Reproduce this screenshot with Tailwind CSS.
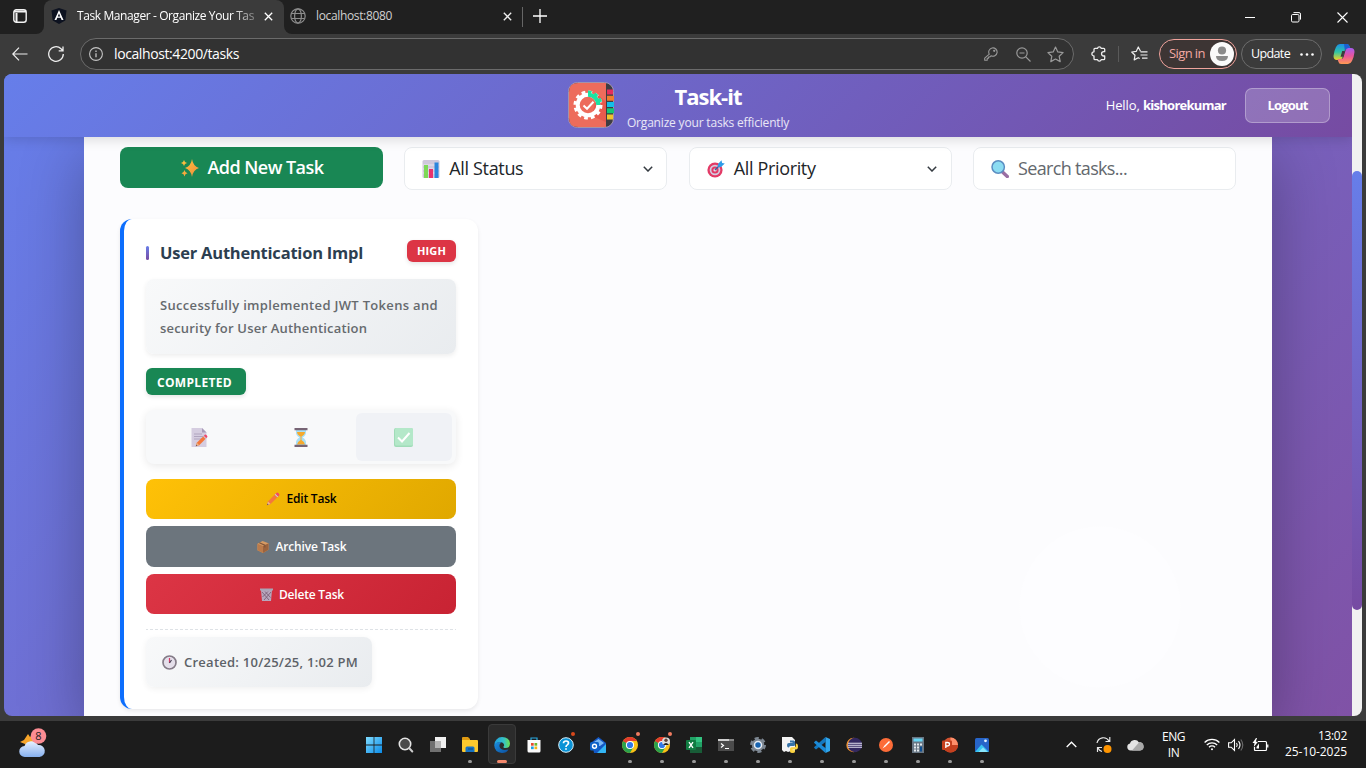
<!DOCTYPE html>
<html lang="en">
<head>
<meta charset="utf-8">
<title>Task Manager - Organize Your Tasks</title>
<script src="https://cdn.jsdelivr.net/npm/@tailwindcss/browser@4"></script>
</head>
<body class="flex h-[768px] w-[1366px] flex-col overflow-hidden bg-[#3b3b3b] font-['Open_Sans','Noto_Sans',sans-serif] whitespace-nowrap">
<svg class="absolute size-0">
  <defs>
    <linearGradient id="gold" x1="0" y1="0" x2="1" y2="1"><stop offset="0" stop-color="#ffc83d"/><stop offset="1" stop-color="#f08a3c"/></linearGradient>
    <linearGradient id="win" gradientUnits="userSpaceOnUse" x1="0" y1="0" x2="16" y2="16"><stop offset="0" stop-color="#7fdcff"/><stop offset="1" stop-color="#0a8be8"/></linearGradient>
    <linearGradient id="cloud" x1="0" y1="0" x2="0" y2="1"><stop offset="0" stop-color="#e8f1ff"/><stop offset="1" stop-color="#86b0ee"/></linearGradient>
    <linearGradient id="edgeA" x1="0" y1="0" x2="1" y2="0"><stop offset="0" stop-color="#1e9de0"/><stop offset=".6" stop-color="#35c1c8"/><stop offset="1" stop-color="#6be04c"/></linearGradient>
    <linearGradient id="edgeB" x1="0" y1="0" x2="1" y2="1"><stop offset="0" stop-color="#1b8fe0"/><stop offset="1" stop-color="#0c4f9e"/></linearGradient>
    <linearGradient id="cpA" x1="0" y1="0" x2="0" y2="1"><stop offset="0" stop-color="#1b8ee8"/><stop offset=".5" stop-color="#2fc5a5"/><stop offset="1" stop-color="#f5d324"/></linearGradient>
    <linearGradient id="cpB" x1="0" y1="0" x2="0" y2="1"><stop offset="0" stop-color="#a65cf0"/><stop offset=".5" stop-color="#e8559c"/><stop offset="1" stop-color="#ff9a52"/></linearGradient>
    <symbol id="chrome" viewBox="0 0 16 16"><circle cx="8" cy="8" r="8" fill="#fbc116"/><path d="M8 8 1.100 4A8 8 0 0 1 14.900 4H8z" fill="#e33b2e"/><path d="M1.100 4A8 8 0 0 0 8 16l3.500-6L8 8z" fill="#2ba24c"/><path d="M1.100 4h6.900v4z" fill="#e33b2e"/><circle cx="8" cy="8" r="4.100" fill="#fff"/><circle cx="8" cy="8" r="3.100" fill="#3078e8"/></symbol>
    <symbol id="pencil" viewBox="0 0 16 16"><path d="m1 15 1.200-4.200L11 2l3 3-8.800 8.800z" fill="#f4783c"/><path d="m2.200 10.800 3 3L1 15z" fill="#e9b98e"/><path d="m1 15 .6-2 1.400 1.400z" fill="#6b4a55"/><path d="m10 3 3 3 1-1-3-3z" fill="#c9c4da"/><path d="m11 2 1-1q1-.8 2 .2l.8.8q1 1 .2 2l-1 1z" fill="#f0466b"/></symbol>
  </defs>
</svg>

<!-- Tab strip -->
<div class="flex h-[34px] shrink-0 bg-[#3b3b3b] text-[12px] text-[#e6e6e6]">
  <div class="flex w-[44px] items-center rounded-br-[8px] bg-[#202020] pb-[2px] pl-[13px]">
    <svg class="size-[14px]" viewBox="0 0 14 14" fill="none" stroke="#f2f2f2" stroke-width="1.400"><rect x=".8" y=".8" width="12.400" height="12.400" rx="2.500"/><path d="M1 2.500h12M3.500 4v9" stroke-width="2"/></svg>
  </div>
  <div class="flex w-[240px] bg-[#202020]"><div class="flex w-full items-center rounded-t-[8px] bg-[#3b3b3b] pb-[2px] pl-[7px]">
    <svg class="h-4 w-4 shrink-0" viewBox="0 0 16 16"><path d="M8 0 15.500 2.600 14.300 12.500 8 16 1.700 12.500.5 2.600z" fill="#0d1220"/><path d="M8 2 3.500 12h1.900l.9-2.200h3.400l.9 2.200h1.900zm0 3.500 1.200 2.900H6.800z" fill="#fff"/></svg>
    <span class="ml-[10px] w-[179px] shrink-0 tracking-[-0.4px] text-white [mask-image:linear-gradient(to_right,black_86%,rgb(0_0_0/0.3))]">Task Manager - Organize Your Tas</span>
    <svg class="ml-[8px] size-[9px] shrink-0" viewBox="0 0 9 9" stroke="#fff" stroke-width="1.300"><path d="m.8.8 7.400 7.400M8.200.8.8 8.200"/></svg>
  </div></div>
  <div class="flex flex-1 rounded-bl-[8px] bg-[#202020]">
    <div class="flex w-[238px] items-center pb-[2px] pl-[6px]">
      <svg class="size-4" viewBox="0 0 16 16" fill="none" stroke="#8c8c8c" stroke-width="1.200"><circle cx="8" cy="8" r="7.200"/><ellipse cx="8" cy="8" rx="3.400" ry="7.200"/><path d="M1.500 5.500h13M1.500 10.500h13"/></svg>
      <span class="ml-[10px] w-[187px] tracking-[-0.35px] text-[#d0d0d0]">localhost:8080</span>
      <svg class="size-[9px] shrink-0" viewBox="0 0 9 9" stroke="#eee" stroke-width="1.300"><path d="m.8.8 7.400 7.400M8.200.8.8 8.200"/></svg>
    </div>
    <div class="mt-[7px] h-[20px] w-px bg-[#666]"></div>
    <svg class="ml-[10px] mt-[9px] size-[14px]" viewBox="0 0 14 14" stroke="#fff" stroke-width="1.300"><path d="M7 0v14M0 7h14"/></svg>
    <div class="ml-auto flex items-center gap-[36px] pr-[18px]">
      <svg class="h-[11px] w-[10px]" viewBox="0 0 10 11" stroke="#fff"><path d="M0 5.500h10"/></svg>
      <svg class="h-[11px] w-[10px]" viewBox="0 0 10 11" fill="none" stroke="#fff"><rect x=".5" y="2.500" width="7.500" height="7.500" rx="1.200"/><path d="M2.500.6H8q1.500 0 1.500 1.500v5.500"/></svg>
      <svg class="size-[11px]" viewBox="0 0 11 11" stroke="#fff" stroke-width="1.100"><path d="m.5.5 10 10M10.500.5l-10 10"/></svg>
    </div>
  </div>
</div>

<!-- Toolbar -->
<div class="flex h-10 shrink-0 items-center bg-[#3b3b3b] pl-[12px] text-white">
  <svg class="h-[14px] w-4" viewBox="0 0 16 14" fill="none" stroke="#eee" stroke-width="1.200"><path d="M15.500 7H.8M7 .7.800 7 7 13.300"/></svg>
  <svg class="ml-[20px] size-[16px]" viewBox="0 0 16 16" fill="none" stroke="#eee" stroke-width="1.300"><path d="M15.300 8A7.300 7.300 0 1 1 13 2.700L14.800 4.500M15 .5v4.300h-4.300"/></svg>
  <div class="ml-4 flex h-8 w-[994px] items-center rounded-full border border-[#6b6b6b] bg-[#323232] pl-[8px] pr-[9px]">
    <svg class="size-[14px]" viewBox="0 0 14 14" fill="none" stroke="#c4c4c4" stroke-width="1.100"><circle cx="7" cy="7" r="6.400"/><path d="M7 6.200v4M7 3.600v1.300" stroke-width="1.300"/></svg>
    <span class="ml-[11px] -mt-px text-[14px] tracking-[-0.4px]">localhost:4200/tasks</span>
    <svg class="ml-auto size-[14px]" viewBox="0 0 14 14" fill="none" stroke="#999" stroke-width="1.100" stroke-linejoin="round"><path d="M5.300 7.200A4.200 4.200 0 1 1 7 8.800L5.700 10H4.500v1.300H3.200v2H.7v-2.200z"/><circle cx="10.200" cy="3.800" r=".6"/></svg>
    <svg class="ml-[18px] size-[15px]" viewBox="0 0 15 15" fill="none" stroke="#999" stroke-width="1.200"><circle cx="6" cy="6" r="5.200"/><path d="m9.800 9.800 4.700 4.700M3.500 6h5"/></svg>
    <svg class="ml-[16px] size-[17px]" viewBox="0 0 17 17" fill="none" stroke="#999" stroke-width="1.200" stroke-linejoin="round"><path d="m8.500 1 2.300 4.900 5.300.7-3.900 3.700 1 5.300-4.700-2.600-4.700 2.600 1-5.300L.9 6.600l5.300-.7z"/></svg>
  </div>
  <svg class="ml-[17px] size-[16px]" viewBox="0 0 16 16" fill="none" stroke="#eee" stroke-width="1.300" stroke-linejoin="round"><path d="M4 2.300h2.500a1.900 1.900 0 0 1 3.700 0h2.500q1 0 1 1v2.400h-1a2 2 0 0 0 0 4.300h1v2.700q0 1-1 1h-2.500a1.900 1.900 0 0 1-3.700 0H4q-1 0-1-1V10a2.100 2.100 0 0 1 0-4.200V3.300q0-1 1-1z"/></svg>
  <div class="ml-[11px] h-[16px] w-px bg-[#5a5a5a]"></div>
  <svg class="ml-[12px] h-[16px] w-[17px]" viewBox="0 0 17 16" fill="none" stroke="#eee" stroke-width="1.200" stroke-linejoin="round"><path d="M9.500 5.300 7.300 1 5.200 5.400.7 6l3.300 3.200-.8 4.700 4-2.200 1.500.8M9.500 5.800h7M9.500 9h7M11 12.200h5.500"/></svg>
  <div class="ml-[11px] flex h-[30px] w-[78px] items-center rounded-full border border-[#f0a39c] bg-[#3d3534] pl-[9px] text-[13px] tracking-[-0.6px] text-[#f3a9a2]"><span class="w-[41px]">Sign in</span>
    <svg class="size-6" viewBox="0 0 24 24"><circle cx="12" cy="12" r="12" fill="#fafafa"/><circle cx="12" cy="8.500" r="4.100" fill="#8a8a8a"/><path d="M6 14h12q0 5-6 5t-6-5z" fill="#8a8a8a"/></svg>
  </div>
  <div class="ml-[4px] flex h-[30px] w-[81px] items-center rounded-full border border-[#6c6c6c] pl-[9px] text-[12.500px] tracking-[-0.62px]"><span class="w-[49px]">Update</span>
    <svg class="h-[3px] w-[14px]" viewBox="0 0 14 3" fill="#fff"><circle cx="1.500" cy="1.500" r="1.300"/><circle cx="7" cy="1.500" r="1.300"/><circle cx="12.500" cy="1.500" r="1.300"/></svg>
  </div>
  <svg class="ml-[11px] h-[20px] w-[22px]" viewBox="0 0 22 20"><path d="M7 0h7q2 0 2.700 2.500L17.500 5H14q-2 0-2.600 2l-1.900 6.500Q8.800 16 6.500 16H4q-3.500 0-3.500-4Q1 7 3 3q1.500-3 4-3z" fill="url(#cpA)"/><path d="M11 0h3q2 0 2.700 2.500L17.500 5H14q-1.500 0-2.200 1.200z" fill="#1c5fd0"/><path d="M15 20H8q-2 0-2.700-2.500L4.500 15H8q2 0 2.600-2l1.900-6.500Q13.200 4 15.500 4H18q3.500 0 3.500 4-.5 5-2.500 9-1.500 3-4 3z" fill="url(#cpB)"/><path d="M9.200 7h2.500L10 12.700H7.600z" fill="#3b3b3b"/></svg>
</div>

<!-- Page viewport -->
<div class="mx-1 flex h-[642px] shrink-0 overflow-hidden rounded-[8px]">
  <div class="flex w-[1348px] flex-col bg-[linear-gradient(135deg,#667eea_0%,#8052a6_100%)]">
    <header class="z-10 flex h-[63px] shrink-0 items-center bg-[linear-gradient(135deg,#667eea_0%,#764ba2_100%)] pl-[563px] text-white shadow-[0_2px_12px_rgba(0,0,0,0.15)]">
      <svg class="-mt-[2px] size-12 shrink-0" viewBox="0 0 48 48">
        <rect x="1.500" y="1.500" width="45" height="45" rx="9" fill="#3e3d43" stroke="#b8a3b6" stroke-width=".8"/>
        <path d="M40 8.500h6v5h-6z" fill="#e62e5c"/><path d="M40 14.800h7v5h-7z" fill="#f07d2e"/><path d="M40 21h7v5h-7z" fill="#14c0e8"/><path d="M40 27.300h7v5h-7z" fill="#13c777"/><path d="M40 33.500h6v5h-6z" fill="#efc52d"/>
        <path d="M11 2h28v44H11q-9 0-9-9V11q0-9 9-9z" fill="#ed6c5c"/>
        <path d="m30 13 9 8v20L25 35z" fill="#e4473f" opacity=".5"/>
        <circle cx="21" cy="24" r="10.300" fill="none" stroke="#fff" stroke-width="4"/>
        <circle cx="21" cy="24" r="13" fill="none" stroke="#fff" stroke-width="3" stroke-dasharray="3.700 3.106"/>
        <path d="M21 13.700A10.300 10.300 0 0 1 31.300 24" fill="none" stroke="#1be3a2" stroke-width="4"/>
        <path d="M34 24A13 13 0 0 0 21 11" fill="none" stroke="#1be3a2" stroke-width="3" stroke-dasharray="0 3.106 3.700 3.106 3.700 3.106 3.700"/>
        <path d="m16.500 24.500 3.500 3.300 6.500-7" fill="none" stroke="#fff" stroke-width="2"/>
      </svg>
      <div class="ml-[12px] mt-[3px] flex w-[162px] flex-col items-center">
        <h1 class="text-[22px] leading-[26px] font-bold tracking-[-1px]">Task-it</h1>
        <p class="mt-[5px] text-[12px] leading-[18px] tracking-[-0.18px] text-white/85">Organize your tasks efficiently</p>
      </div>
      <div class="ml-auto text-[13px] tracking-[-0.1px]">Hello, <b class="tracking-[-0.73px]">kishorekumar</b></div>
      <button class="ml-[19px] mr-[22px] h-[35px] w-[85px] rounded-[7px] border border-white/30 bg-white/20 text-[13px] font-bold tracking-[-0.8px]">Logout</button>
    </header>
    <main class="mx-20 h-[579px] bg-[#fcfcfe] bg-[radial-gradient(circle_at_1016px_470px,#fdfdff_0,#fdfdff_80px,transparent_81px)] px-9 pt-[10px] shadow-[0_20px_60px_rgba(0,0,0,0.3)]">
      <div class="grid grid-cols-4 items-start gap-x-[21.33px] text-[18px]">
        <button class="flex h-[41px] items-center justify-center rounded-[8px] bg-[#198754] pl-[2px] font-semibold tracking-[-0.54px] text-white">
          <svg class="mr-[8px] size-[18px]" viewBox="0 0 18 18" fill="url(#gold)"><path d="M11 0q1 7 7 9-6 2-7 9-1-7-7-9 6-2 7-9zM3 1q.5 2.500 3 3-2.500.5-3 3-.5-2.500-3-3 2.500-.5 3-3zM3.500 11q.5 2.500 3 3.200-2.500.6-3 3.300-.5-2.700-3-3.300 2.500-.7 3-3.200z"/></svg>
          Add New Task</button>
        <div class="flex h-[43px] items-center rounded-[8px] border border-[#e9ecef] bg-white px-[17px] tracking-[-0.35px] text-[#212529]">
          <svg class="mr-[9px] size-[18px]" viewBox="0 0 18 18"><rect x=".5" width="17" height="18" rx="1.500" fill="#cfc8dc"/><path d="M.5 5h17M.5 9h17M.5 13h17" stroke="#e8e4ef"/><path d="M2 5h4v13H2z" fill="#7ed957"/><path d="M7 9h4v9H7z" fill="#e8336d"/><path d="M12.500 2.500h4V18h-4z" fill="#2b86dd"/></svg>
          All Status
          <svg class="ml-auto -mr-[4px] h-[6px] w-[10px]" viewBox="0 0 10 6" fill="none" stroke="#343a40" stroke-width="1.500"><path d="m.8.8 4.200 4.200L9.200.8"/></svg>
        </div>
        <div class="flex h-[43px] items-center rounded-[8px] border border-[#e9ecef] bg-white px-[17px] tracking-[-0.34px] text-[#212529]">
          <svg class="mr-[9px] size-[18px]" viewBox="0 0 18 18"><circle cx="8" cy="10" r="7.600" fill="#e33a66"/><circle cx="8" cy="10" r="5.300" fill="#d3cbe0"/><circle cx="8" cy="10" r="3.600" fill="#e33a66"/><circle cx="8" cy="10" r="1.600" fill="#e9dce9"/><path d="m8 10 6-6" stroke="#3b5fa0" stroke-width="1.400"/><path d="M11 6.800V4L14.500.3l.6 2.600 2.700.6L14 7z" fill="#2f9be8"/></svg>
          All Priority
          <svg class="ml-auto -mr-[3px] h-[6px] w-[10px]" viewBox="0 0 10 6" fill="none" stroke="#343a40" stroke-width="1.500"><path d="m.8.8 4.200 4.200L9.200.8"/></svg>
        </div>
        <div class="flex h-[43px] items-center rounded-[8px] border border-[#e9ecef] bg-white px-[17px] tracking-[-0.66px] text-[#63686d]">
          <svg class="mr-[9px] size-[18px]" viewBox="0 0 18 18"><path d="m11.500 12 4.800 4.500" stroke="#9a6fa3" stroke-width="3.400" stroke-linecap="round"/><circle cx="7.200" cy="7" r="6.200" fill="#8bdcf2" stroke="#5b8ec2" stroke-width="1.500"/></svg>
          Search tasks...</div>
      </div>

      <article class="mt-[29px] flex h-[490px] w-[358px] flex-col rounded-[12px] border-l-4 border-[#0d6efd] bg-white px-[22px] pt-[21px] shadow-[0_2px_4px_rgba(0,0,0,0.08)]">
        <div class="flex items-start justify-between">
          <div class="mt-[1px] flex items-center"><i class="h-[14px] w-[3px] rounded-sm bg-linear-to-b from-[#667eea] to-[#764ba2]"></i>
            <h2 class="ml-[11px] text-[16.500px] leading-6 font-bold tracking-[-0.22px] text-[#2c3e50]">User Authentication Impl</h2></div>
          <span class="flex h-[22px] w-[49px] items-center justify-center rounded-[6px] bg-[#dc3545] text-[11px] font-bold tracking-[0.1px] text-white shadow-[0_2px_4px_rgba(0,0,0,0.1)]">HIGH</span>
        </div>
        <p class="mt-[14px] h-[75px] shrink-0 rounded-[8px] bg-[linear-gradient(135deg,#f8f9fa,#e9ecef)] px-[14px] pt-[15px] text-[13px] leading-[23px] font-semibold tracking-[0.32px] text-[#666a6e] shadow-[0_2px_5px_rgba(0,0,0,0.07)]">Successfully implemented JWT Tokens and<br><span class="tracking-[0.19px]">security for User Authentication</span></p>
        <span class="mt-[14px] flex h-[27px] w-[100px] shrink-0 items-center rounded-[6px] bg-[#198754] pt-[2px] pl-[11px] text-[12px] font-bold tracking-[0.32px] text-white shadow-[0_2px_4px_rgba(0,0,0,0.1)]">COMPLETED</span>
        <div class="mt-[15px] flex h-[54px] shrink-0 items-center justify-between rounded-[8px] bg-[#f8f9fa] px-1 shadow-[0_2px_8px_rgba(0,0,0,0.09)]">
          <div class="flex w-24 justify-center pl-[2px]"><svg class="size-[19px]" viewBox="0 0 19 19"><path d="M1.500 0H12l4.500 4.500V19h-15z" fill="#d5cde0"/><path d="M12 0v4.500h4.500z" fill="#a89bb8"/><path d="M4 6h8M4 8.500h10M4 11h8" stroke="#b0a5bf"/><use href="#pencil" x="4" y="6" width="15" height="13"/></svg></div>
          <div class="flex w-24 justify-center pr-px"><svg class="h-[19px] w-[14px]" viewBox="0 0 14 19"><path d="M2 2h10v2.500Q12 7.500 8.500 9.500q3.500 2 3.500 5V17H2v-2.500q0-3 3.500-5Q2 7.500 2 4.500z" fill="#a8dff5"/><path d="M3 4h8q0 2.500-3.500 4.500v3.500q3 1.500 3.500 4.500H3Q3.500 13.500 6.500 12V8.500Q3 6.500 3 4z" fill="#f6a92c"/><path d="M.5 0h13v2.200H.5zM.5 16.800h13V19H.5z" fill="#776474"/></svg></div>
          <div class="flex h-12 w-24 items-center justify-center rounded-[6px] bg-[#f0f2f6] pr-px"><svg class="size-[19px]" viewBox="0 0 19 19"><rect width="19" height="19" rx="2" fill="#a0dcb8"/><rect x="1" width="18" height="17.500" rx="1.500" fill="#b4e8c9"/><path d="m4 9.500 4 4 7.500-8.500" fill="none" stroke="#fff" stroke-width="2"/></svg></div>
        </div>
        <button class="mt-[15px] flex h-10 shrink-0 items-center justify-center rounded-[8px] bg-[linear-gradient(135deg,#ffc107,#e0a800)] pl-px text-[12px] font-semibold tracking-[-0.2px] text-black"><svg class="mr-[6px] size-[14px]" viewBox="0 0 16 16"><use href="#pencil"/></svg>Edit Task</button>
        <button class="mt-[7px] flex h-[41px] shrink-0 items-center justify-center rounded-[8px] bg-[#6c757d] pl-[2px] text-[12px] font-semibold tracking-[-0.16px] text-white"><svg class="mr-[6px] size-[12px]" viewBox="0 0 13 13"><path d="m6 0 6.500 2.500v7L6.500 13 .5 10V3z" fill="#d69a62"/><path d="m6.500 5.500 6-3v7L6.500 13z" fill="#9c633d"/><path d="m2.500 2 6 2.500v2.500" stroke="#7d543b" fill="none" stroke-width="1.200"/><path d="m.5 3 6 2.500V13l-6-3z" fill="#bb7b4b"/></svg>Archive Task</button>
        <button class="mt-[7px] flex h-10 shrink-0 items-center justify-center rounded-[8px] bg-[linear-gradient(135deg,#dc3545,#c82333)] pt-px pl-[2px] text-[12px] font-semibold tracking-[-0.2px] text-white"><svg class="mr-[6px] size-[13px]" viewBox="0 0 13 13"><path d="M1 2h11l-1 11H2z" fill="#b8a6bd"/><path d="m2 4 7 8M5 3.500l5.500 6M11 4l-7 8M8 3.500 2.500 9" stroke="#75586e" stroke-width=".8"/><path d="M0 .5h13v2H0z" fill="#a9a4b5"/></svg>Delete Task</button>
        <svg class="mt-[15px] h-px w-full shrink-0" viewBox="0 0 310 1" preserveAspectRatio="none"><path d="M0 .5h310" stroke="#dee2e6" stroke-dasharray="3 2" stroke-dashoffset="1"/></svg>
        <div class="mt-[7px] flex h-[50px] w-[226px] shrink-0 items-center rounded-[8px] bg-[linear-gradient(135deg,#f8f9fa,#e9ecef)] pt-px pl-[16px] text-[13px] font-semibold tracking-[0.25px] text-[#5d6268] shadow-[0_2px_6px_rgba(0,0,0,0.06)]"><svg class="-mt-px mr-[7px] size-[15px]" viewBox="0 0 15 15"><circle cx="7.500" cy="7.500" r="6.500" fill="#e4dfea" stroke="#857c88" stroke-width="1.700"/><path d="M7.500 8V3" stroke="#d93a68" stroke-width="1.200"/><path d="m7.500 8 2-3" stroke="#4a4458" stroke-width="1.200"/></svg>Created: 10/25/25, 1:02 PM</div>
      </article>
    </main>
  </div>
  <div class="z-10 w-[10px] bg-[#f1f1f1] pt-[97px]"><div class="h-[439px] rounded-full bg-linear-to-b from-[#667eea] to-[#764ba2]"></div></div>
</div>

<!-- Taskbar -->
<div class="mt-[5px] flex h-[47px] shrink-0 items-center bg-[#1c1c1c] text-[12px] leading-4 text-white">
  <svg class="-mt-[4px] ml-[19px] h-[30px] w-[28px]" viewBox="0 0 28 30"><path d="m9 6 2 3 3-3 1 10-7 3-2-3-5-2 4-2z" fill="#f7a52a"/><path d="M6 29a5.500 5.500 0 0 1-.5-11A7.500 7.500 0 0 1 19 17a6 6 0 0 1 1.500 12z" fill="url(#cloud)"/><circle cx="19.500" cy="8" r="7.800" fill="#fb8c93"/><text x="16.300" y="12" font-size="11" fill="#222">8</text></svg>
  <div class="ml-[311px] flex h-full">
    <div class="flex h-full w-8 items-center justify-center"><svg class="size-4" viewBox="0 0 16 16" fill="url(#win)"><path d="M0 0h7.600v7.600H0zM8.400 0H16v7.600H8.400zM0 8.400h7.600V16H0zM8.400 8.400H16V16H8.400z"/></svg></div>
    <div class="flex h-full w-8 items-center justify-center"><svg class="size-4" viewBox="0 0 16 16"><circle cx="7" cy="7" r="5.700" fill="#4a4a4a" stroke="#e4e4e4" stroke-width="1.600"/><path d="m11.300 11.300 3 3.200" stroke="#ccc" stroke-width="2" stroke-linecap="round"/></svg></div>
    <div class="flex h-full w-8 items-center justify-center"><svg class="h-[15px] w-4" viewBox="0 0 16 15"><path d="M5 0h11v11H5z" fill="#f0f0f0"/><path d="M0 4h11v11H0z" fill="#707070"/><path d="M5 4h6v7H5z" fill="#b5b5b5"/></svg></div>
    <div class="relative flex h-full w-8 items-center justify-center"><svg class="h-[15px] w-4" viewBox="0 0 16 15"><path d="M0 1q0-1 1-1h5l2 2v3H0z" fill="#e09b12"/><path d="M0 3h15q1 0 1 1v10q0 1-1 1H1q-1 0-1-1z" fill="#fcc92e"/><path d="M3.500 15v-4q0-1.500 1.500-1.500h6q1.500 0 1.500 1.500v4z" fill="#1673c4"/><path d="M6 12h5" stroke="#0b4a86"/></svg><i class="absolute bottom-[5px] h-[3px] w-1 rounded-full bg-[#999]"></i></div>
    <div class="relative flex h-full w-8 items-center justify-center"><i class="absolute top-[3px] left-[2px] h-[40px] w-[28px] rounded-[4px] border border-[#3a3a3a] bg-[#2b2b2b]"></i><svg class="relative size-4" viewBox="0 0 16 16"><path d="M.3 8A7.800 7.800 0 0 1 8 0q7.500 0 8 6.500Q16 11 11.500 11 9 11 9.500 9.500 11 8 9 6 5 3.500.3 8z" fill="url(#edgeA)"/><path d="M.2 8Q3 3.500 8 5.500q-3 .8-2.500 4Q6.500 14 14.500 12.500 12.500 16 8 16 .5 15.500.2 8z" fill="url(#edgeB)"/></svg><i class="absolute bottom-[5px] h-[3px] w-[10px] rounded-full bg-[#f4886c]"></i></div>
    <div class="flex h-full w-8 items-center justify-center"><svg class="h-4 w-[14px]" viewBox="0 0 14 16"><path d="M4 4V1h6v3" fill="none" stroke="#29a8e0" stroke-width="1.200"/><path d="M.5 3h13v11q0 1.500-1.500 1.500H2Q.5 15.500.5 14z" fill="#fafafa"/><path d="M4 6h2.700v2.700H4z" fill="#e8482e"/><path d="M7.500 6h2.700v2.700H7.500z" fill="#6fb82e"/><path d="M4 9.500h2.700v2.700H4z" fill="#1aa0e8"/><path d="M7.500 9.500h2.700v2.700H7.500z" fill="#f8b517"/></svg></div>
    <div class="relative flex h-full w-8 items-center justify-center"><svg class="size-4" viewBox="0 0 16 16" fill="none"><circle cx="8" cy="8" r="7.300" fill="#0a93d6" stroke="#d8f0fb"/><path d="M5.500 6.300Q5.500 4 8 4t2.500 2q0 1-1.200 1.900Q8 8.700 8 10M8 11.300v1.500" stroke="#fff" stroke-width="1.700"/></svg><i class="absolute top-[11px] left-[21px] size-1 rounded-full bg-[#d9481c]"></i></div>
    <div class="flex h-full w-8 items-center justify-center"><svg class="size-4" viewBox="0 0 16 16"><path d="m2 5 6.500-5L16 6v9q0 1-1 1H4z" fill="#1457c4"/><path d="m4 5 4.500-3L14 6l-4 3H6z" fill="#79b8f5"/><path d="m16 7-9 9h8q1 0 1-1z" fill="#33b6f4"/><rect y="5" width="9" height="8.500" rx="1.500" fill="#0f62c8"/><circle cx="4.500" cy="9.200" r="2" fill="none" stroke="#fff" stroke-width="1.400"/></svg></div>
    <div class="relative flex h-full w-8 items-center justify-center"><svg class="size-4"><use href="#chrome"/></svg><i class="absolute top-[11px] left-[22px] size-1 rounded-full bg-[#f07b60]"></i><i class="absolute bottom-[5px] h-[3px] w-1 rounded-full bg-[#999]"></i></div>
    <div class="relative flex h-full w-8 items-center justify-center"><svg class="size-4"><use href="#chrome"/><circle cx="12" cy="4.500" r="4" fill="#ddd"/><circle cx="12" cy="3.300" r="1.700" fill="#61443a"/><path d="M9 8q3-4 6 0z" fill="#222"/></svg><i class="absolute top-[11px] left-[22px] size-1 rounded-full bg-[#f07b60]"></i><i class="absolute bottom-[5px] h-[3px] w-1 rounded-full bg-[#999]"></i></div>
    <div class="relative flex h-full w-8 items-center justify-center"><svg class="size-4" viewBox="0 0 16 16"><path d="M4 0h12v16H4z" fill="#185c37"/><path d="M4 0h6v8H4z" fill="#21a366"/><path d="M10 0h6v5h-6z" fill="#33c481"/><path d="M10 5h6v5h-6z" fill="#21a366"/><path d="M4 8h6v4H4z" fill="#107c41"/><rect y="3" width="10" height="10" rx="1" fill="#107c41"/><path d="m3 5.200 4 5.600m0-5.600-4 5.600" stroke="#fff" stroke-width="1.400"/></svg><i class="absolute bottom-[5px] h-[3px] w-1 rounded-full bg-[#999]"></i></div>
    <div class="relative flex h-full w-8 items-center justify-center"><svg class="h-3 w-4" viewBox="0 0 16 12"><path d="M0 0h16v12H0z" fill="#4b4b4b"/><path d="M0 0h11v2H0z" fill="#d0d0d0"/><path d="M11 0h5v2h-5z" fill="#888"/><path d="m3 4.500 2.500 2L3 8.500M7 9.500h4" fill="none" stroke="#fff" stroke-width="1.200"/></svg><i class="absolute bottom-[5px] h-[3px] w-1 rounded-full bg-[#999]"></i></div>
    <div class="relative flex h-full w-8 items-center justify-center"><svg class="size-4" viewBox="0 0 16 16"><circle cx="8" cy="8" r="6.200" fill="#7d8792"/><circle cx="8" cy="8" r="6.600" fill="none" stroke="#7d8792" stroke-width="2.800" stroke-dasharray="4 2.910"/><circle cx="8" cy="8" r="3.500" fill="#1763b0" stroke="#e6edf5" stroke-width="1.500"/></svg><i class="absolute bottom-[5px] h-[3px] w-1 rounded-full bg-[#999]"></i></div>
    <div class="relative flex h-full w-8 items-center justify-center"><svg class="size-4" viewBox="0 0 16 16"><path d="M0 0h10l3 3v11l-2 1-2-1-3 1-2-1-2 1-2-2z" fill="#f3f3f3"/><path d="M8 3.500h3.500q1.500 0 1.500 1.500v2.500q0 1.500-1.500 1.500H8.500Q7 9 7 10.500h-.5Q5 10.500 5 8q0-2 2-2h3.500V5.500H8z" fill="#3673a8"/><path d="M13.800 6.500q2.200 0 2.200 3t-2 3h-3.500v.8H13V14.500q0 1.500-2.500 1.500T8 14.500V12q0-1.700 1.700-1.700h2.500q1.600 0 1.600-1.500z" fill="#fbd33f"/></svg><i class="absolute bottom-[5px] h-[3px] w-1 rounded-full bg-[#999]"></i></div>
    <div class="relative flex h-full w-8 items-center justify-center"><svg class="size-4" viewBox="0 0 16 16"><path d="M11.500 0 16 2v12l-4.500 2z" fill="#2fa5ec"/><path d="m11.500 0 .5 4.500L2 12.500.3 11q-.5-.5 0-1z" fill="#1478bf"/><path d="m11.500 16 .5-4.500L2 3.500.3 5q-.5.500 0 1z" fill="#1b8ad6"/></svg><i class="absolute bottom-[5px] h-[3px] w-1 rounded-full bg-[#999]"></i></div>
    <div class="relative flex h-full w-8 items-center justify-center"><svg class="size-4" viewBox="0 0 16 16"><circle cx="7.500" cy="8" r="7.200" fill="#f09332"/><circle cx="9" cy="8" r="7.200" fill="#332861"/><path d="M2 6.200h14M1.800 8.200h14.200M2 10.200h14" stroke="#e2deef" stroke-width="1.100"/></svg><i class="absolute bottom-[5px] h-[3px] w-1 rounded-full bg-[#999]"></i></div>
    <div class="relative flex h-full w-8 items-center justify-center"><svg class="size-[14px]" viewBox="0 0 14 14"><circle cx="7" cy="7" r="7" fill="#fd6c38"/><path d="m3.500 10.500 2-3L10 3l1 1-4.500 4.500z" fill="#fff"/></svg><i class="absolute bottom-[5px] h-[3px] w-1 rounded-full bg-[#999]"></i></div>
    <div class="relative flex h-full w-8 items-center justify-center"><svg class="h-4 w-3" viewBox="0 0 12 16"><path d="M0 0h12v16H0z" fill="#687684"/><path d="M1.500 1.500h9v3h-9z" fill="#67d6f5"/><path d="M2 6.500h2v2H2zM5 6.500h2v2H5zM8 6.500h2v2H8zM2 9.500h2v2H2zM5 9.500h2v2H5zM2 12.500h2v2H2zM5 12.500h2v2H5z" fill="#e3e9ee"/><path d="M8 9.500h2v5H8z" fill="#0e4f92"/></svg><i class="absolute bottom-[5px] h-[3px] w-1 rounded-full bg-[#999]"></i></div>
    <div class="relative flex h-full w-8 items-center justify-center"><svg class="size-4" viewBox="0 0 16 16"><circle cx="8.500" cy="8" r="7.500" fill="#d35230"/><path d="M8.500.5A7.500 7.500 0 0 1 16 8H8.500z" fill="#ff8f6b"/><path d="M1 8h15a7.500 7.500 0 0 1-15 0z" fill="#c5401f"/><rect y="3.500" width="10" height="9.500" rx="1" fill="#c43e1c"/><path d="M3.800 11V5.500h1.700q2 0 2 1.700T5.500 9H4" fill="none" stroke="#fff" stroke-width="1.300"/></svg><i class="absolute bottom-[5px] h-[3px] w-1 rounded-full bg-[#999]"></i></div>
    <div class="relative flex h-full w-8 items-center justify-center"><svg class="size-[14px]" viewBox="0 0 14 14"><rect width="14" height="14" rx="1.500" fill="#2765c9"/><path d="m0 14 6.500-7.500L14 14z" fill="#38c5f2"/><path d="M3.500 14 8 9.500l4.500 4.500z" fill="#8ae5fb"/><circle cx="10.500" cy="2.800" r="1.400" fill="#eaf6ff"/></svg><i class="absolute bottom-[5px] h-[3px] w-1 rounded-full bg-[#999]"></i></div>
  </div>
  <svg class="ml-[68px] h-[7px] w-[11px]" viewBox="0 0 11 7" fill="none" stroke="#fff" stroke-width="1.300"><path d="M.7 6 5.500 1.200 10.300 6"/></svg>
  <svg class="ml-[17.500px] size-[18px]" viewBox="0 0 18 18" fill="none" stroke="#e8e8e8" stroke-width="1.200"><path d="M2 7a6.500 6.500 0 0 1 12-2M14.800 1v4.500h-4.300M7 15.500a6.500 6.500 0 0 1-4-3.500M2.500 16v-4.500H7"/><circle cx="12.500" cy="13" r="4" fill="#ff9500" stroke="none"/></svg>
  <svg class="ml-[14px] h-[12px] w-[17px]" viewBox="0 0 17 12"><path d="M3.500 11.500A3.500 3.500 0 0 1 3 4.600a5 5 0 0 1 9-1.200 4 4 0 0 1 1 8z" fill="#e4e4e4"/><path d="m5 11.500 7-8a4 4 0 0 1 1 8z" fill="#a9a9a9"/></svg>
  <div class="ml-[18px] w-[24px] text-center tracking-[-0.45px]">ENG<br>IN</div>
  <svg class="ml-[18px] h-[13px] w-4" viewBox="0 0 16 13" fill="none" stroke="#fff" stroke-width="1.300"><path d="M.6 4.500a10.500 10.500 0 0 1 14.800 0M2.800 7a7.300 7.300 0 0 1 10.400 0M5 9.200a4.200 4.200 0 0 1 6 0"/><circle cx="8" cy="11.200" r="1" fill="#fff" stroke="none"/></svg>
  <svg class="ml-[8px] h-[14px] w-4" viewBox="0 0 16 14" fill="none" stroke="#fff" stroke-width="1.100"><path d="M.6 4.800h2.600L6.500 1.500v11L3.200 9.200H.6zM8.500 5q1.500 2 0 4M10.500 3.200q3 3.800 0 7.600"/><path d="M12.800 1.500q4 5.500 0 11" stroke="#6b6b6b"/></svg>
  <svg class="ml-[8px] h-[14px] w-[17px]" viewBox="0 0 17 14" fill="none" stroke="#fff" stroke-width="1.200"><path d="M6 3.500h7.500q1 0 1 1v7q0 1-1 1h-10q-1 0-1-1V9M15.800 6.500v3"/><path d="M4.500 10.500V9L7 5.500v5z" fill="#fff" stroke="none"/><path d="m4 0-3.500 5h2L1.800 9 6 3.800H3.800L5 0z" fill="#fff" stroke="none"/></svg>
  <div class="-mt-[1px] mr-[19px] ml-auto text-right tracking-[-0.06px]"><span class="tracking-[-0.3px]">13:02</span><br>25-10-2025</div>
</div>
</body>
</html>
